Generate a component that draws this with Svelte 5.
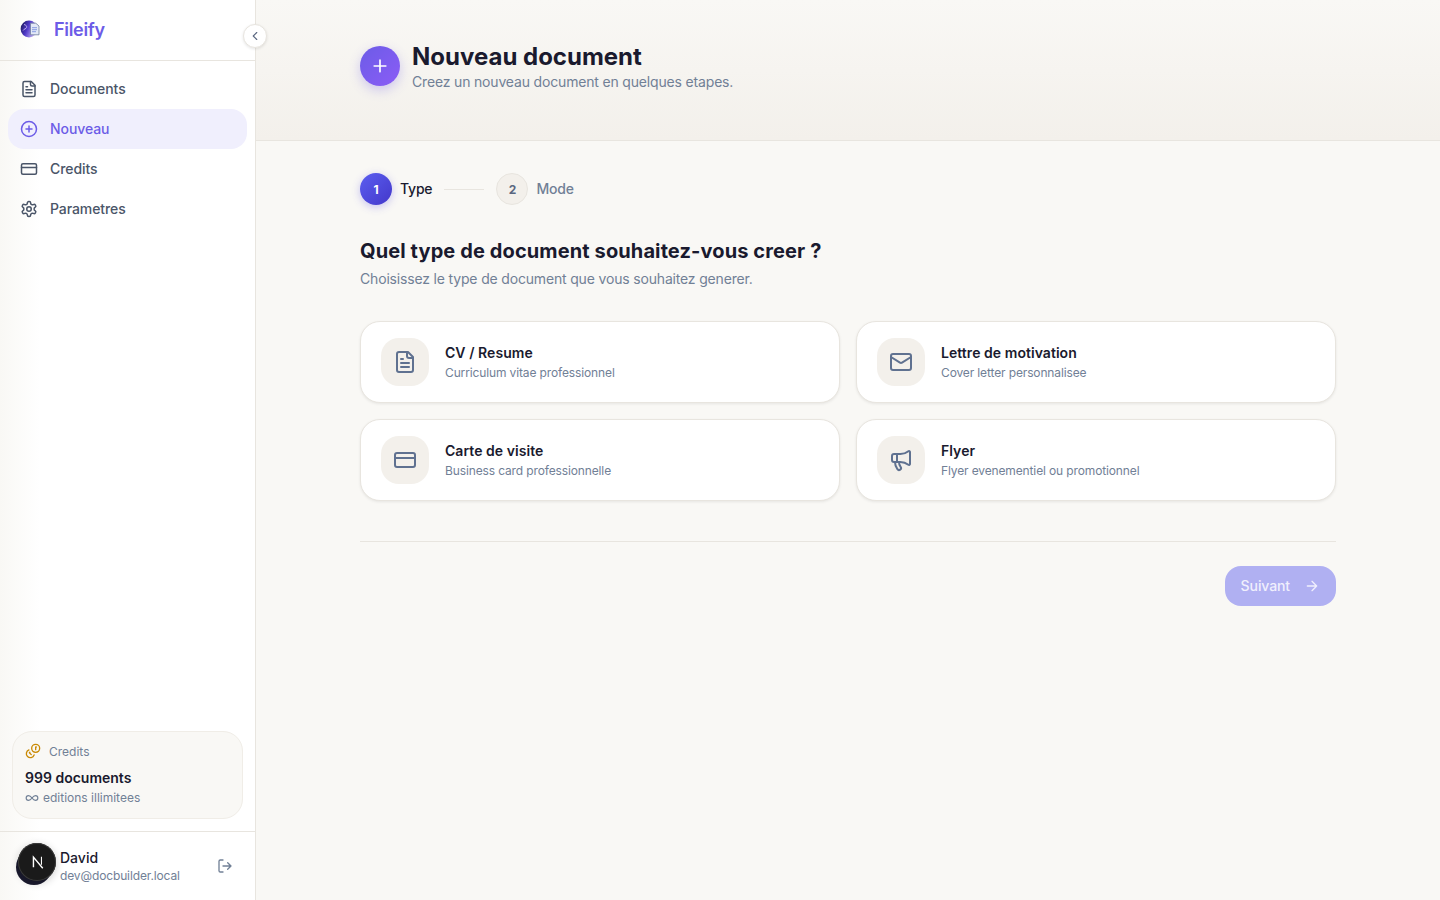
<script>
  const navItems = [
    { label: 'Documents', icon: 'doc' },
    { label: 'Nouveau', icon: 'plus', active: true },
    { label: 'Credits', icon: 'card' },
    { label: 'Parametres', icon: 'cog' }
  ];

  const docTypes = [
    { title: 'CV / Resume', desc: 'Curriculum vitae professionnel', icon: 'doc' },
    { title: 'Lettre de motivation', desc: 'Cover letter personnalisee', icon: 'mail' },
    { title: 'Carte de visite', desc: 'Business card professionnelle', icon: 'card' },
    { title: 'Flyer', desc: 'Flyer evenementiel ou promotionnel', icon: 'flyer' }
  ];

  const paths = {
    doc: ['M15 2H6a2 2 0 0 0-2 2v16a2 2 0 0 0 2 2h12a2 2 0 0 0 2-2V7Z', 'M14 2v4a2 2 0 0 0 2 2h4', 'M10 9H8', 'M16 13H8', 'M16 17H8'],
    plus: ['M22 12a10 10 0 1 1-20 0 10 10 0 0 1 20 0z', 'M8 12h8', 'M12 8v8'],
    card: ['M4 5h16a2 2 0 0 1 2 2v10a2 2 0 0 1-2 2H4a2 2 0 0 1-2-2V7a2 2 0 0 1 2-2z', 'M2 10h20'],
    cog: [
      'M12.22 2h-.44a2 2 0 0 0-2 2v.18a2 2 0 0 1-1 1.73l-.43.25a2 2 0 0 1-2 0l-.15-.08a2 2 0 0 0-2.73.73l-.22.38a2 2 0 0 0 .73 2.73l.15.1a2 2 0 0 1 1 1.72v.51a2 2 0 0 1-1 1.74l-.15.09a2 2 0 0 0-.73 2.73l.22.38a2 2 0 0 0 2.73.73l.15-.08a2 2 0 0 1 2 0l.43.25a2 2 0 0 1 1 1.73V20a2 2 0 0 0 2 2h.44a2 2 0 0 0 2-2v-.18a2 2 0 0 1 1-1.73l.43-.25a2 2 0 0 1 2 0l.15.08a2 2 0 0 0 2.73-.73l.22-.39a2 2 0 0 0-.73-2.73l-.15-.08a2 2 0 0 1-1-1.74v-.5a2 2 0 0 1 1-1.74l.15-.09a2 2 0 0 0 .73-2.73l-.22-.38a2 2 0 0 0-2.73-.73l-.15.08a2 2 0 0 1-2 0l-.43-.25a2 2 0 0 1-1-1.73V4a2 2 0 0 0-2-2z',
      'M15 12a3 3 0 1 1-6 0 3 3 0 0 1 6 0z'
    ],
    mail: ['M4 4h16a2 2 0 0 1 2 2v12a2 2 0 0 1-2 2H4a2 2 0 0 1-2-2V6a2 2 0 0 1 2-2z', 'm22 7-8.97 5.7a1.94 1.94 0 0 1-2.06 0L2 7'],
    flyer: ['M11 6a13 13 0 0 0 8.4-2.8A1 1 0 0 1 21 4v12a1 1 0 0 1-1.6.8A13 13 0 0 0 11 14H5a2 2 0 0 1-2-2V8a2 2 0 0 1 2-2z', 'M6 14a12 12 0 0 0 2.4 7.2 2 2 0 0 0 3.2-2.4A8 8 0 0 1 10 14', 'M8 6v8']
  };
</script>

<div class="layout">
  <aside class="sidebar">
    <div class="brand">
      <svg class="logo" viewBox="0 0 20 20" width="20" height="20">
        <defs>
          <linearGradient id="globe" x1="0" y1="0" x2="1" y2="0.4">
            <stop offset="0" stop-color="#14144a" />
            <stop offset="0.5" stop-color="#4f38c8" />
            <stop offset="1" stop-color="#c7b6f5" />
          </linearGradient>
        </defs>
        <circle cx="9" cy="10" r="8.4" fill="url(#globe)" />
        <path d="M4 5.5c2 .5 3 1.5 2.6 3-.5 1.5-2.6 1.2-3.5 3" fill="none" stroke="#c9b8f8" stroke-width="0.9" />
        <path d="M10.5 4.2h5.3l3.2 2.8v8.8h-8.5z" fill="#e3e9f6" stroke="#6f7d9c" stroke-width="0.8" />
        <path d="M12 8.7h5M12 10.7h5M12 12.7h4" stroke="#7c93e0" stroke-width="0.9" />
      </svg>
      <span class="brand-name">Fileify</span>
    </div>
    <button class="collapse" aria-label="Replier">
      <svg viewBox="0 0 24 24" width="14" height="14" fill="none" stroke="currentColor" stroke-width="2" stroke-linecap="round" stroke-linejoin="round"><path d="m15 18-6-6 6-6" /></svg>
    </button>

    <nav class="nav">
      {#each navItems as item}
        <a class="nav-item" class:active={item.active} href="#top">
          <svg viewBox="0 0 24 24" width="18" height="18" fill="none" stroke="currentColor" stroke-width="2" stroke-linecap="round" stroke-linejoin="round">
            {#each paths[item.icon] as d}<path {d} />{/each}
          </svg>
          <span>{item.label}</span>
        </a>
      {/each}
    </nav>

    <div class="credits">
      <div class="credits-head">
        <svg class="coins" viewBox="0 0 24 24" width="16" height="16" fill="none" stroke="#ca8a04" stroke-width="2" stroke-linecap="round" stroke-linejoin="round">
          <path d="M14 8a6 6 0 1 1-12 0 6 6 0 0 1 12 0z" />
          <path d="M18.09 10.37A6 6 0 1 1 10.34 18" />
          <path d="M7 6h1v4" />
          <path d="m16.71 13.88.7.71-2.82 2.82" />
        </svg>
        <span>Credits</span>
      </div>
      <div class="credits-count">999 documents</div>
      <div class="credits-note">
        <svg viewBox="0 0 24 24" width="14" height="14" fill="none" stroke="currentColor" stroke-width="2" stroke-linecap="round" stroke-linejoin="round"><path d="M12 12c-2-2.67-4-4-6-4a4 4 0 1 0 0 8c2 0 4-1.33 6-4Zm0 0c2 2.67 4 4 6 4a4 4 0 0 0 0-8c-2 0-4 1.33-6 4Z" /></svg>
        <span>editions illimitees</span>
      </div>
    </div>

    <div class="user">
      <div class="avatar"></div>
      <div class="user-info">
        <div class="user-name">David</div>
        <div class="user-mail">dev@docbuilder.local</div>
      </div>
      <button class="logout" aria-label="Deconnexion">
        <svg viewBox="0 0 24 24" width="16" height="16" fill="none" stroke="currentColor" stroke-width="2" stroke-linecap="round" stroke-linejoin="round"><path d="m16 17 5-5-5-5M21 12H9M9 21H5a2 2 0 0 1-2-2V5a2 2 0 0 1 2-2h4" /></svg>
      </button>
    </div>
    <div class="dev-badge">
      <svg viewBox="0 0 18 18" width="16" height="16" fill="none" stroke="#fff" stroke-width="1.6"><path d="M5 15V3.5L15.5 16" /><path d="M14 3v9" stroke-width="1.2" /></svg>
    </div>
  </aside>

  <main class="main">
    <header class="page-head">
      <div class="inner head-row">
        <div class="head-icon">
          <svg viewBox="0 0 24 24" width="20" height="20" fill="none" stroke="#fff" stroke-width="2" stroke-linecap="round"><path d="M12 5v14M5 12h14" /></svg>
        </div>
        <div>
          <h1>Nouveau document</h1>
          <p>Creez un nouveau document en quelques etapes.</p>
        </div>
      </div>
    </header>

    <section class="inner content">
      <div class="steps">
        <div class="step-num current">1</div>
        <span class="step-label current">Type</span>
        <div class="step-line"></div>
        <div class="step-num">2</div>
        <span class="step-label">Mode</span>
      </div>

      <h2>Quel type de document souhaitez-vous creer ?</h2>
      <p class="lead">Choisissez le type de document que vous souhaitez generer.</p>

      <div class="grid">
        {#each docTypes as t}
          <button class="type-card">
            <div class="type-icon">
              <svg viewBox="0 0 24 24" width="24" height="24" fill="none" stroke="currentColor" stroke-width="2" stroke-linecap="round" stroke-linejoin="round">
                {#each paths[t.icon] as d}<path {d} />{/each}
              </svg>
            </div>
            <div class="type-text">
              <div class="type-title">{t.title}</div>
              <div class="type-desc">{t.desc}</div>
            </div>
          </button>
        {/each}
      </div>

      <div class="actions">
        <button class="next" disabled>
          <span>Suivant</span>
          <svg viewBox="0 0 24 24" width="16" height="16" fill="none" stroke="currentColor" stroke-width="2" stroke-linecap="round" stroke-linejoin="round"><path d="M5 12h14M12 5l7 7-7 7" /></svg>
        </button>
      </div>
    </section>
  </main>
</div>

<style>
  :global(body) {
    margin: 0;
    background: #f9f8f5;
    font-family: 'Inter', 'Liberation Sans', sans-serif;
    color: #1a1a2e;
  }

  .layout {
    display: flex;
    height: 900px;
    overflow: hidden;
  }

  .sidebar {
    position: relative;
    width: 255px;
    flex-shrink: 0;
    display: flex;
    flex-direction: column;
    background: linear-gradient(90deg, #f9f8f5 0, #fff 40px);
    border-right: 1px solid #e8e5df;
  }

  .brand {
    height: 60px;
    display: flex;
    align-items: center;
    gap: 14px;
    padding-left: 20px;
    border-bottom: 1px solid #e8e5df;
  }

  .logo {
    flex-shrink: 0;
    margin-top: -2px;
  }

  .brand-name {
    margin-top: -2px;
    font-size: 18px;
    font-weight: 600;
    letter-spacing: -0.3px;
    color: #6c5ce7;
  }

  .collapse {
    position: absolute;
    top: 24px;
    right: -12px;
    width: 24px;
    height: 24px;
    padding: 0;
    border: 1px solid #e8e5df;
    border-radius: 50%;
    background: #fff;
    color: #5a6780;
    display: flex;
    align-items: center;
    justify-content: center;
    box-shadow: 0 1px 3px rgba(0, 0, 0, 0.1);
  }

  .nav {
    flex: 1;
    display: flex;
    flex-direction: column;
    padding: 8px;
  }

  .nav-item {
    height: 40px;
    display: flex;
    align-items: center;
    gap: 12px;
    padding: 0 12px;
    border-radius: 16px;
    font-size: 14px;
    font-weight: 500;
    color: #4a5568;
    text-decoration: none;
  }

  .nav-item span {
    margin-top: -1px;
    letter-spacing: -0.08px;
  }

  .nav-item.active {
    background: #f0effd;
    color: #6c5ce7;
  }

  .credits {
    margin: 0 12px 12px;
    padding: 11px 12px 13px;
    height: 62px;
    background: #f9f8f5;
    border: 1px solid #f0ede7;
    border-radius: 20px;
  }

  .coins {
    transform: scaleX(-1);
  }

  .credits-head {
    display: flex;
    align-items: center;
    gap: 8px;
    font-size: 12px;
    color: #718096;
  }

  .credits-count {
    margin-top: 10px;
    font-size: 14px;
    font-weight: 600;
    color: #1a1a2e;
  }

  .credits-note {
    margin-top: 4px;
    display: flex;
    align-items: center;
    gap: 4px;
    font-size: 12px;
    color: #718096;
  }

  .user {
    height: 68px;
    display: flex;
    align-items: center;
    padding: 0 16px;
    border-top: 1px solid #e8e5df;
  }

  .avatar {
    width: 36px;
    height: 36px;
    margin-top: 2px;
    border-radius: 50%;
    background: #1a1a2e;
    flex-shrink: 0;
  }

  .user-info {
    flex: 1;
    margin-left: 8px;
  }

  .user-name {
    font-size: 14px;
    font-weight: 500;
    color: #1a1a2e;
    line-height: 18px;
  }

  .user-mail {
    margin-top: 1px;
    font-size: 12px;
    letter-spacing: -0.13px;
    color: #718096;
    line-height: 16px;
  }

  .logout {
    width: 24px;
    height: 24px;
    margin-right: 2px;
    padding: 0;
    border: 0;
    background: none;
    color: #718096;
    display: flex;
    align-items: center;
    justify-content: center;
  }

  .dev-badge {
    position: absolute;
    left: 18px;
    top: 843px;
    width: 38px;
    height: 38px;
    border-radius: 50%;
    background: #1a1a1a;
    box-shadow: 0 0 0 1px #3a3a3a inset, 0 2px 8px rgba(0, 0, 0, 0.2);
    display: flex;
    align-items: center;
    justify-content: center;
  }

  .main {
    flex: 1;
    min-width: 0;
  }

  .inner {
    max-width: 976px;
    margin: 0 auto;
  }

  .page-head {
    height: 140px;
    background: linear-gradient(180deg, #f9f8f5, #f3f0eb);
    border-bottom: 1px solid #e8e5df;
  }

  .head-row {
    display: flex;
    gap: 12px;
    padding-top: 41px;
  }

  .head-icon {
    width: 40px;
    height: 40px;
    margin-top: 5px;
    border-radius: 50%;
    background: linear-gradient(135deg, #6c5ce7, #8b5cf6);
    box-shadow: 0 4px 12px rgba(108, 92, 231, 0.3);
    display: flex;
    align-items: center;
    justify-content: center;
  }

  h1 {
    margin: 0;
    font-size: 24px;
    font-weight: 700;
    line-height: 32px;
    color: #1a1a2e;
  }

  .page-head p {
    margin: -1px 0 0;
    font-size: 14px;
    letter-spacing: -0.17px;
    line-height: 20px;
    color: #718096;
  }

  .content {
    padding-top: 32px;
  }

  .steps {
    display: flex;
    align-items: center;
    height: 32px;
  }

  .step-num {
    width: 30px;
    height: 30px;
    border: 1px solid #e8e5df;
    border-radius: 50%;
    background: #f3f0eb;
    color: #5a6780;
    font-size: 12px;
    font-weight: 700;
    display: flex;
    align-items: center;
    justify-content: center;
  }

  .step-num.current {
    width: 32px;
    height: 32px;
    border: 0;
    background: linear-gradient(135deg, #5b5ef0, #4338ca);
    color: #fff;
    box-shadow: 0 2px 8px rgba(79, 70, 229, 0.3);
  }

  .step-label {
    margin: -1px 0 0 8px;
    font-size: 14px;
    font-weight: 500;
    letter-spacing: -0.2px;
    color: #718096;
  }

  .step-label.current {
    color: #1a1a2e;
  }

  .step-line {
    width: 40px;
    height: 1px;
    margin: 0 12px;
    background: #e8e5df;
  }

  h2 {
    margin: 32px 0 0;
    font-size: 20px;
    font-weight: 700;
    letter-spacing: 0.11px;
    line-height: 28px;
    color: #1a1a2e;
  }

  .lead {
    margin: 4px 0 0;
    font-size: 14px;
    letter-spacing: -0.17px;
    line-height: 20px;
    color: #718096;
  }

  .grid {
    display: grid;
    grid-template-columns: 1fr 1fr;
    gap: 16px;
    margin-top: 32px;
  }

  .type-card {
    height: 82px;
    display: flex;
    align-items: center;
    gap: 16px;
    padding: 0 20px;
    background: #fff;
    border: 1px solid #e8e5df;
    border-radius: 20px;
    box-shadow: 0 1px 3px rgba(0, 0, 0, 0.08);
    text-align: left;
    font: inherit;
  }

  .type-icon {
    width: 48px;
    height: 48px;
    border-radius: 18px;
    background: #f3f0eb;
    color: #5f7190;
    display: flex;
    align-items: center;
    justify-content: center;
    flex-shrink: 0;
  }

  .type-title {
    font-size: 14px;
    font-weight: 600;
    letter-spacing: 0.05px;
    line-height: 20px;
    color: #1a1a2e;
  }

  .type-desc {
    font-size: 12px;
    letter-spacing: -0.13px;
    line-height: 16px;
    margin-top: 2px;
    color: #718096;
  }

  .actions {
    margin-top: 40px;
    padding-top: 24px;
    border-top: 1px solid #e8e5df;
    display: flex;
    justify-content: flex-end;
  }

  .next {
    height: 40px;
    display: flex;
    align-items: center;
    gap: 14px;
    padding: 0 16px;
    border: 0;
    border-radius: 16px;
    background: #b0b0f2;
    color: #f0effd;
    font: inherit;
    font-size: 14px;
    font-weight: 500;
    letter-spacing: -0.1px;
  }

  .next span {
    margin-top: -1px;
  }
</style>
